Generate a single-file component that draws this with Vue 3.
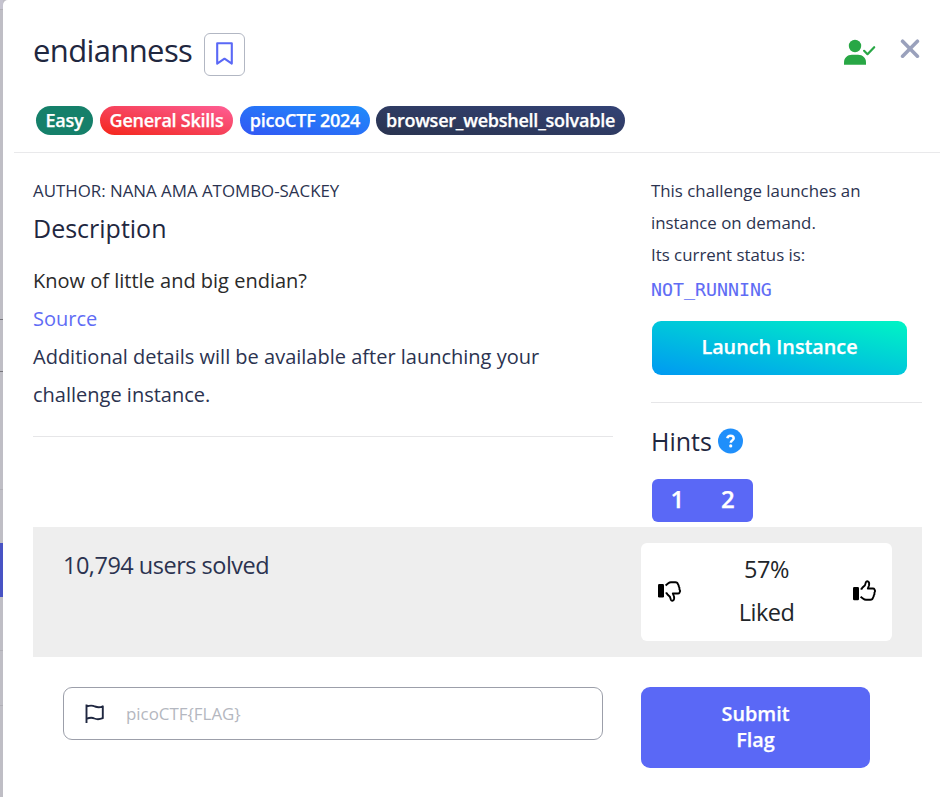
<script setup>
import { ref } from 'vue'

const tags = [
  { label: 'Easy', tone: 'easy' },
  { label: 'General Skills', tone: 'category' },
  { label: 'picoCTF 2024', tone: 'event' },
  { label: 'browser_webshell_solvable', tone: 'plain' },
]
const hints = [1, 2]
const flag = ref('')
</script>

<template>
  <div class="page">
    <div class="backdrop">
      <i class="seg top"></i>
      <i class="seg s1"></i>
      <i class="seg s2"></i>
      <i class="seg s3"></i>
      <i class="seg active"></i>
      <i class="seg s4"></i>
      <i class="seg s5"></i>
    </div>
    <main class="modal">
      <header>
        <div class="title-row">
          <h1>endianness</h1>
          <button class="bookmark" aria-label="Bookmark">
            <svg width="18" height="24" viewBox="0 0 18 24"><path d="M1.2 1.2H15.8V21.6L8.5 16.7L1.2 21.6Z" fill="none" stroke="#5a68f6" stroke-width="2.1" stroke-linejoin="round" /></svg>
          </button>
          <svg class="user" width="32" height="27" viewBox="0 0 32 27">
            <circle cx="11" cy="7" r="6.2" fill="#28a745" />
            <path d="M0 25.7V23.5C0 18.8 3.3 15.7 8 15.7H14C18.7 15.7 22 18.8 22 23.5V25.7Z" fill="#28a745" />
            <path d="M20.1 11.8L23.5 15.2L30.2 8.2" fill="none" stroke="#28a745" stroke-width="2.2" stroke-linecap="round" stroke-linejoin="round" />
          </svg>
          <button class="close" aria-label="Close">
            <svg width="20" height="20" viewBox="0 0 20 20"><path d="M2.6 2.2L17.4 17.2M17.4 2.2L2.6 17.2" stroke="#9aa1bc" stroke-width="3.6" stroke-linecap="round" /></svg>
          </button>
        </div>
        <div class="tags">
          <span v-for="t in tags" :key="t.label" class="tag" :class="t.tone">{{ t.label }}</span>
        </div>
      </header>

      <div class="content">
        <section class="left">
          <p class="author">AUTHOR: NANA AMA ATOMBO-SACKEY</p>
          <h2>Description</h2>
          <div class="body">
            <p class="dark">Know of little and big endian?</p>
            <p><a>Source</a></p>
            <p>Additional details will be available after launching your<br />challenge instance.</p>
          </div>
        </section>
        <aside>
          <div class="status-text">This challenge launches an<br />instance on demand.<br />Its current status is:</div>
          <code>NOT_RUNNING</code>
          <button class="launch">Launch Instance</button>
          <div class="hints">
            <h2>Hints</h2>
            <svg width="26" height="26" viewBox="0 0 26 26">
              <circle cx="12.5" cy="13" r="12.5" fill="#1f8ffb" />
              <path d="M9.3 10.2C9.6 8.6 10.8 7.7 12.5 7.7C14.5 7.7 15.7 8.7 15.7 10.3C15.7 12.3 12.8 12.5 12.8 14.7" fill="none" stroke="#fff" stroke-width="2.5" />
              <circle cx="12.7" cy="17.9" r="1.6" fill="#fff" />
            </svg>
          </div>
          <div class="hint-buttons"><button v-for="h in hints" :key="h">{{ h }}</button></div>
        </aside>
      </div>

      <section class="stats">
        <p class="solved">10,794 users solved</p>
        <div class="rating">
          <svg class="thumb" width="24" height="21" viewBox="0 0 24 21">
            <rect x="0" y="3" width="6" height="13.5" rx="1.2" fill="#000" />
            <path d="M7.6 4.4L10.3 2.2Q11.5 1.2 13 1.2H17.3Q19.6 1.2 20 3.4Q20.9 4.3 20.8 5.6Q21.8 6.6 21.4 8.2Q22.8 10 21.5 11.7Q21 12.5 20 12.5H14.8L16 15.5Q16.7 18.8 14.8 19.6Q13.2 20.1 12.7 18.2Q12.3 15.5 10.5 14.4Q9.2 13.5 8.7 12.1H7.6" fill="none" stroke="#000" stroke-width="1.9" stroke-linejoin="round" />
          </svg>
          <div class="percent">57%<br />Liked</div>
          <svg class="thumb up" width="24" height="21" viewBox="0 0 24 21">
            <rect x="0" y="7" width="6" height="13.3" rx="1.2" fill="#000" />
            <path d="M7.6 16.7L10.3 18.8Q11.5 19.8 13 19.8H17.3Q19.6 19.8 20 17.6Q20.9 16.7 20.8 15.4Q21.8 14.4 21.4 12.8Q22.8 11 21.5 9.3Q21 8.5 20 8.5H14.8L16 5.5Q16.7 2.2 14.8 1.4Q13.2 .9 12.7 2.8Q12.3 5.5 10.5 6.6Q9.2 7.5 8.7 8.9H7.6" fill="none" stroke="#000" stroke-width="1.9" stroke-linejoin="round" />
          </svg>
        </div>
      </section>

      <form @submit.prevent>
        <label class="field">
          <svg width="20" height="20" viewBox="0 0 20 20"><path d="M1.5 .5V19M1.5 2.5Q6.5 .7 10 2.5Q14 4.1 17.8 2.3V14.2Q13 16 9.5 14.5Q6 12.9 1.5 14.9" fill="none" stroke="#1f2740" stroke-width="1.9" stroke-linejoin="round" /></svg>
          <input v-model="flag" placeholder="picoCTF{FLAG}" />
        </label>
        <button class="submit">Submit<br />Flag</button>
      </form>
    </main>
  </div>
</template>

<style>
body {
  background: #bfbec5;
  overflow: hidden;
}
</style>

<style scoped>
* {
  box-sizing: border-box;
}
h1, h2, p {
  margin: 0;
  font-weight: 400;
}
button {
  border: 0;
  padding: 0;
  font-family: inherit;
  color: #fff;
}
svg {
  display: block;
  flex: none;
}
.page {
  display: flex;
  width: 940px;
  height: 797px;
  font-family: 'Open Sans', sans-serif;
  color: #2b3350;
  background: #bfbec5;
}
.backdrop {
  width: 3px;
  display: flex;
  flex-direction: column;
}
.seg {
  border-bottom: 1px solid #b1b0b7;
}
.top { height: 10px; background: #c5c3cf; }
.s1 { height: 310px; border-color: #77767c; }
.s2 { height: 52px; border-color: #77767c; }
.s3 { height: 118px; }
.active { height: 54px; background: #4853c4; border: 0; margin-top: 53px; }
.s4 { height: 54px; }
.s5 { height: 55px; }
.modal {
  flex: 1;
  background: #fff;
  border-top-left-radius: 5px;
}
header {
  height: 153px;
  margin-left: 11px;
  padding: 32px 0 0 19px;
  border-bottom: 1px solid #e9e9eb;
}
.title-row {
  display: flex;
  height: 74px;
  align-items: flex-start;
}
h1 {
  width: 171px;
  font-size: 31px;
  line-height: 37px;
  letter-spacing: -0.62px;
  color: #1f2740;
  white-space: nowrap;
}
.bookmark {
  display: flex;
  justify-content: center;
  width: 41px;
  height: 43px;
  margin-top: 1px;
  padding: 8px 0 0 1px;
  border: 1px solid #b2b7c3;
  border-radius: 6px;
  background: #fff;
}
.user {
  margin: 7px 0 0 599px;
}
.close {
  margin: 7px 0 0 24px;
  background: none;
}
.tags {
  display: flex;
  gap: 7px;
  padding-left: 3px;
}
.tag {
  height: 29px;
  border-radius: 15px;
  color: #fff;
  font-size: 18px;
  font-weight: 600;
  line-height: 28px;
  letter-spacing: -0.24px;
  text-align: center;
  white-space: nowrap;
}
.tag,
.launch,
.submit,
.hint-buttons button {
  -webkit-text-stroke: 0.25px #fff;
}
.easy { width: 57px; background: #15806a; }
.category { width: 133px; background: linear-gradient(to top right, #f5261a, #f6425a 50%, #ff5f96); }
.event { width: 130px; background: linear-gradient(to top right, #3257f4, #1e8cfb); }
.plain { width: 249px; margin-left: -1px; background: linear-gradient(to top right, #2a3450, #334275); }
.content {
  display: flex;
  height: 374px;
  padding-left: 30px;
}
.left {
  width: 580px;
  height: 284px;
  padding-top: 22px;
  border-bottom: 1px solid #e6e6e8;
}
.author {
  font-size: 16.86px;
  line-height: 32px;
}
h2 {
  font-size: 25px;
  line-height: 38px;
  color: #1f2740;
}
.left h2 {
  margin: 2px 0 15px;
}
.body {
  font-size: 20px;
  line-height: 38px;
  white-space: nowrap;
}
.dark { color: #2a2a2a; }
a { color: #5f6cf5; }
aside {
  width: 271px;
  margin-left: 38px;
  padding-top: 22px;
}
.status-text {
  font-size: 16.85px;
  line-height: 32px;
}
code {
  display: block;
  height: 50px;
  font-family: 'DejaVu Sans Mono', monospace;
  font-size: 18.25px;
  line-height: 38px;
  color: #5f6cf5;
  -webkit-text-stroke: 0.1px #5f6cf5;
}
.launch {
  display: block;
  width: 255px;
  height: 54px;
  margin-left: 1px;
  padding-bottom: 4px;
  border-radius: 9px;
  background: linear-gradient(to top right, #0099f2, #00f5c4);
  font-size: 19.8px;
  font-weight: 600;
}
.hints {
  display: flex;
  height: 77px;
  margin-top: 27px;
  padding-top: 20px;
  border-top: 1px solid #e6e6e8;
}
.hints h2 {
  width: 67px;
  line-height: 36px;
}
.hints svg { margin-top: 5px; }
.hint-buttons {
  display: flex;
  width: 101px;
  height: 43px;
  margin-left: 1px;
  border-radius: 6px;
  background: #5a68f6;
}
.hint-buttons button {
  flex: 1;
  padding-bottom: 5px;
  background: none;
  font-size: 24px;
  font-weight: 600;
}
.stats {
  display: flex;
  justify-content: space-between;
  height: 130px;
  margin: 0 18px 0 30px;
  padding: 16px 30px;
  background: #eee;
}
.solved {
  font-size: 23.5px;
  line-height: 45px;
  letter-spacing: -0.5px;
}
.rating {
  display: flex;
  justify-content: space-between;
  width: 251px;
  height: 98px;
  padding: 5px 15px 0 17px;
  border-radius: 6px;
  background: #fff;
}
.percent {
  margin-left: -2px;
  font-size: 23.5px;
  line-height: 43px;
  letter-spacing: -0.5px;
  color: #212529;
  text-align: center;
}
.thumb { margin-top: 33px; }
.up { margin-top: 32px; }
form {
  display: flex;
  align-items: flex-start;
  padding: 30px 0 0 60px;
}
.field {
  display: flex;
  align-items: center;
  width: 540px;
  height: 53px;
  padding-left: 21px;
  border: 1px solid #9c9faa;
  border-radius: 9px;
}
input {
  width: 400px;
  margin-left: 21px;
  padding: 0;
  border: 0;
  outline: 0;
  font: 16.9px 'Open Sans', sans-serif;
}
input::placeholder { color: #b4b7c0; }
.submit {
  width: 229px;
  height: 81px;
  margin-left: 38px;
  padding-bottom: 2px;
  border-radius: 9px;
  background: #5a68f6;
  font-size: 19.8px;
  font-weight: 600;
  line-height: 26px;
}
</style>
